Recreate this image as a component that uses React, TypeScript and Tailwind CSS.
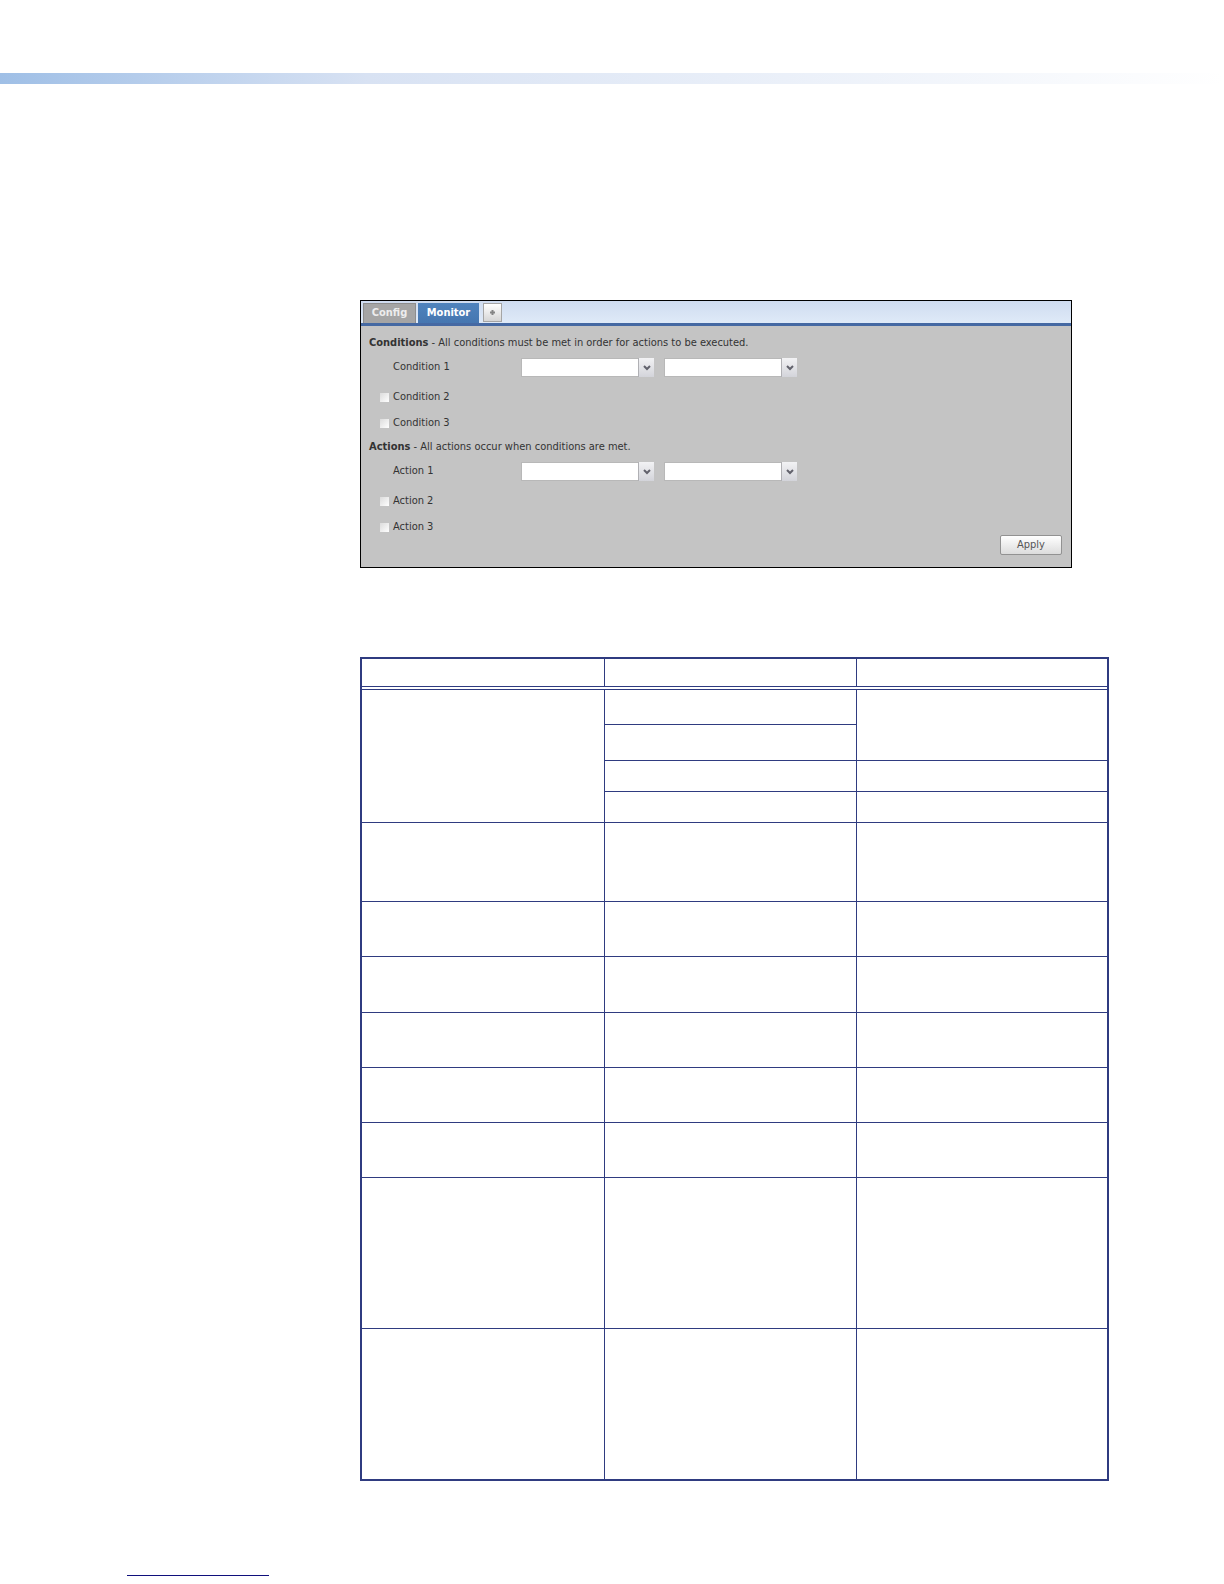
import React from 'react';

const Combo = ({ label }: { label: string }) => (
    <div className="relative w-[133px] h-[19px] shrink-0">
        <select aria-label={label} className="appearance-none block w-full h-full bg-white border border-[#b8b8b8] rounded-none outline-none">
            <option></option>
        </select>
        <span className="absolute right-0 top-0 w-4 h-full bg-linear-to-b from-[#f2f2f4] to-[#d3d4da] border-l border-[#b0b0b4] flex items-center justify-center pointer-events-none">
            <svg width="8" height="6" viewBox="0 0 8 6" fill="none" stroke="#62626c" strokeWidth="2">
                <path d="M1 1l3 3 3-3" />
            </svg>
        </span>
    </div>
);

const CheckRow = ({ label }: { label: string }) => (
    <label className="flex items-center gap-1 pl-[11px] h-[26px]">
        <input type="checkbox" className="appearance-none w-[9px] h-[9px] bg-linear-to-br from-[#dcdcdc] to-white" />
        {label}
    </label>
);

const Group = ({ title, note, item }: { title: string; note: string; item: string }) => (
    <fieldset className="mb-px">
        <legend className="h-5 leading-5 whitespace-nowrap"><b>{title}</b> - {note}</legend>
        <div className="flex items-center h-[29px] mb-[2px]">
            <span className="w-32 ml-6 shrink-0">{item} 1</span>
            <div className="flex gap-[10px]">
                <Combo label={`${item} 1 source`} />
                <Combo label={`${item} 1 state`} />
            </div>
        </div>
        <CheckRow label={`${item} 2`} />
        <CheckRow label={`${item} 3`} />
    </fieldset>
);

const MonitorPanel = () => (
    <section className="w-[712px] max-w-full border border-black bg-[#c4c4c4] text-[#333] text-[11px] font-['DejaVu_Sans_Condensed','DejaVu_Sans',sans-serif]">
        <nav className="flex items-end h-[25px] pl-[2px] border-b-3 border-[#4569a3] bg-linear-to-b from-[#cfdcf0] to-[#dfeaf8]">
            <button className="w-[53px] h-5 mr-[2px] bg-[#a5a5a5] border border-b-0 border-[#8d8d8d] text-[#ededed] font-bold">Config</button>
            <button className="w-[61px] h-5 mr-1 bg-linear-to-b from-[#4f83bd] to-[#4576b0] text-white font-bold">Monitor</button>
            <button aria-label="Add tab" className="w-[19px] h-[19px] mb-px border border-[#a5a5a5] bg-linear-to-b from-white to-[#d6d6d6] flex items-center justify-center">
                <svg width="7" height="7" viewBox="0 0 7 7" stroke="#858585" strokeWidth="2">
                    <path d="M3.500 1v5M1 3.500h5" />
                </svg>
            </button>
        </nav>
        <form className="pl-2 pr-[9px] pt-[7px] pb-3">
            <Group title="Conditions" note="All conditions must be met in order for actions to be executed." item="Condition" />
            <Group title="Actions" note="All actions occur when conditions are met." item="Action" />
            <div className="flex justify-end -mt-[6px]">
                <button type="button" className="w-[62px] h-5 border border-[#929292] rounded-xs bg-linear-to-b from-white to-[#dcdcdc] text-[#555]">Apply</button>
            </div>
        </form>
    </section>
);

const Cell = ({ rowSpan }: { rowSpan?: number }) => <td rowSpan={rowSpan} className="border border-[#2f3b80]"></td>;

const TallRow = ({ height }: { height: string }) => (
    <tr className={height}>
        <Cell />
        <Cell />
        <Cell />
    </tr>
);

const ActionsTable = () => (
    <div className="border-2 border-[#2f3b80]">
        <table className="w-full table-fixed border-collapse border-hidden">
            <colgroup>
                <col className="w-[242px]" />
                <col className="w-[252px]" />
                <col />
            </colgroup>
            <thead>
                <tr className="h-[27px]">
                    <th className="border border-[#2f3b80]"></th>
                    <th className="border border-[#2f3b80]"></th>
                    <th className="border border-[#2f3b80]"></th>
                </tr>
            </thead>
            <tbody>
                <tr className="h-[3px]">
                    <td colSpan={3} className="border border-[#2f3b80] p-0"></td>
                </tr>
                <tr className="h-[35px]">
                    <Cell rowSpan={4} />
                    <Cell />
                    <Cell rowSpan={2} />
                </tr>
                <tr className="h-9"><Cell /></tr>
                <tr className="h-[31px]"><Cell /><Cell /></tr>
                <tr className="h-[31px]"><Cell /><Cell /></tr>
                <TallRow height="h-[79px]" />
                <TallRow height="h-[55px]" />
                <TallRow height="h-[56px]" />
                <TallRow height="h-[55px]" />
                <TallRow height="h-[55px]" />
                <TallRow height="h-[55px]" />
                <TallRow height="h-[151px]" />
                <TallRow height="h-[151px]" />
            </tbody>
        </table>
    </div>
);

export default function App() {
    return (
        <div className="min-h-screen bg-white overflow-hidden">
            <header className="mt-[73px] h-[11px] bg-linear-to-r from-[#9fbfe6] via-[#d8e2f3] via-30% to-white" />
            <main className="mt-[216px] ml-[360px] mr-[115px]">
                <MonitorPanel />
                <div className="mt-[89px]">
                    <ActionsTable />
                </div>
            </main>
            <footer className="mt-[94px] pl-[127px] pb-2">
                <a href="#contents" aria-label="Contents" className="block w-[142px] border-b border-[#10107c]"></a>
            </footer>
        </div>
    );
}
